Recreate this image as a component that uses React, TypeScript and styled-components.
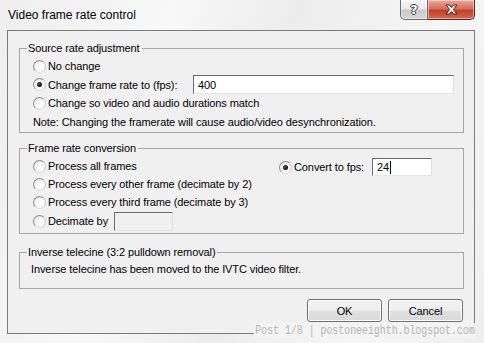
import React from 'react';
import styled, { createGlobalStyle } from 'styled-components';

const GlobalStyle = createGlobalStyle`
  html, body {
    margin: 0;
    padding: 0;
  }
  body {
    font-family: "Liberation Sans", Arial, sans-serif;
    background: #f3f3f3;
  }
`;

const Window = styled.div`
  position: relative;
  width: 484px;
  height: 343px;
  display: flex;
  flex-direction: column;
  overflow: hidden;
  background: linear-gradient(105deg, #eeeeee 0%, #f8f8f8 30%, #ececec 52%, #f6f6f6 78%, #eeeeee 100%);
`;

const TitleBar = styled.div`
  height: 30px;
  flex-shrink: 0;
  display: flex;
  justify-content: space-between;
  align-items: flex-start;
`;

const Title = styled.span`
  margin: 8px 0 0 8px;
  font-size: 12px;
  line-height: 15px;
  color: #000;
`;

const CaptionButtons = styled.div`
  display: flex;
  margin-right: 9px;
`;

const CaptionButton = styled.div<{ $kind: 'help' | 'close' }>`
  width: ${(p) => (p.$kind === 'help' ? 28 : 47)}px;
  height: 20px;
  box-sizing: border-box;
  display: flex;
  align-items: center;
  justify-content: center;
  border: 1px solid ${(p) => (p.$kind === 'help' ? '#6a6a6a' : '#5e231b')};
  border-top: none;
  border-left-width: ${(p) => (p.$kind === 'help' ? 1 : 0)}px;
  border-radius: ${(p) => (p.$kind === 'help' ? '0 0 0 5px' : '0 0 5px 0')};
  background: ${(p) =>
    p.$kind === 'help'
      ? 'linear-gradient(#f7f7f7 0%, #e8e8e8 45%, #c9c9c9 55%, #d8d8d8 100%)'
      : 'linear-gradient(#e9a99c 0%, #d7705f 45%, #c0402c 55%, #d06a52 100%)'};
  box-shadow: inset 0 0 0 1px rgba(255, 255, 255, 0.45);
`;

const HelpGlyph = styled.span`
  font-family: "DejaVu Sans", sans-serif;
  font-weight: bold;
  font-size: 13px;
  line-height: 13px;
  color: #fff;
  text-shadow: 1px 0 0 #3c3c3c, -1px 0 0 #3c3c3c, 0 1px 0 #3c3c3c, 0 -1px 0 #3c3c3c;
`;

const Client = styled.div`
  margin: 0 9px 0 7px;
  height: 304px;
  box-sizing: border-box;
  border: 1px solid #7b7b7b;
  background: #f0f0f0;
  padding: 11px 10px 0 11px;
  display: flex;
  flex-direction: column;
  font-size: 11px;
  letter-spacing: -0.1px;
  color: #000;
`;

const GroupBox = styled.fieldset<{ $pad: string; $gap: number }>`
  margin: 0 0 ${(p) => p.$gap}px;
  padding: ${(p) => p.$pad};
  border: 1px solid #a6a6a6;
  min-inline-size: 0;
`;

const Legend = styled.legend<{ $shift: number }>`
  margin-left: ${(p) => p.$shift}px;
  padding: 0 2px 0 1px;
  line-height: 13px;
`;

const OptionRow = styled.div<{ $h?: number }>`
  display: flex;
  align-items: center;
  height: ${(p) => p.$h ?? 18}px;
  white-space: nowrap;
`;

const Radio = styled.span<{ $checked?: boolean }>`
  position: relative;
  flex-shrink: 0;
  width: 13px;
  height: 13px;
  box-sizing: border-box;
  margin-right: 2px;
  border-radius: 50%;
  border: 1px solid;
  border-color: #8d8d8d #c9c9c9 #dadada #8d8d8d;
  background: radial-gradient(circle at 60% 60%, #ffffff 0%, #f7f7f7 45%, #dcdcdc 100%);
  &::after {
    content: '';
    display: ${(p) => (p.$checked ? 'block' : 'none')};
    position: absolute;
    left: 3px;
    top: 3px;
    width: 5px;
    height: 5px;
    border-radius: 50%;
    background: radial-gradient(circle at 40% 40%, #555 0%, #111 60%, #000 100%);
  }
`;

const TextBox = styled.div<{ $w: number; $h: number; $ml: string; $disabled?: boolean }>`
  display: flex;
  align-items: center;
  flex-shrink: 0;
  width: ${(p) => p.$w}px;
  height: ${(p) => p.$h}px;
  margin-left: ${(p) => p.$ml};
  box-sizing: border-box;
  padding-left: 4px;
  border: 1px solid;
  border-color: #6a6a6a #dedede #e6e6e6 #6a6a6a;
  background: ${(p) => (p.$disabled ? '#f0f0f0' : '#ffffff')};
`;

const Caret = styled.span`
  width: 1px;
  height: 13px;
  margin-left: 1px;
  background: #000;
`;

const Note = styled.div`
  margin-top: 4px;
  line-height: 13px;
  white-space: nowrap;
`;

const ConversionGrid = styled.div`
  display: grid;
  grid-template-columns: 246px 1fr;
`;

const Plain = styled.div`
  line-height: 13px;
`;

const ButtonRow = styled.div`
  display: flex;
  justify-content: flex-end;
  gap: 6px;
  margin: -1px 1px 0 0;
`;

const DialogButton = styled.button`
  width: 75px;
  height: 23px;
  box-sizing: border-box;
  padding: 0;
  border: 1px solid #707070;
  border-radius: 3px;
  background: linear-gradient(#f4f4f4 0%, #ececec 50%, #e0e0e0 51%, #d9d9d9 100%);
  box-shadow: inset 0 0 0 1px #fbfbfb;
  font: inherit;
  letter-spacing: inherit;
  color: #000;
`;

const Watermark = styled.span`
  position: absolute;
  right: 9px;
  bottom: 5px;
  padding-left: 2px;
  background: #f3f3f3;
  font-family: "Liberation Mono", monospace;
  font-size: 13px;
  line-height: 15px;
  color: #b4b4b4;
  transform: scaleX(0.76);
  transform-origin: right center;
  white-space: nowrap;
`;

function CloseGlyph() {
  return (
    <svg width="13" height="11" viewBox="0 0 13 11">
      <path
        d="M1 1h3.4L6.5 3.6 8.6 1H12L8.3 5.5 12 10H8.6L6.5 7.4 4.4 10H1l3.7-4.5z"
        fill="#fff"
        stroke="#4b1a12"
        strokeWidth="1"
        strokeLinejoin="round"
      />
    </svg>
  );
}

export default function App() {
  return (
    <Window>
      <GlobalStyle />
      <TitleBar>
        <Title>Video frame rate control</Title>
        <CaptionButtons>
          <CaptionButton $kind="help">
            <HelpGlyph>?</HelpGlyph>
          </CaptionButton>
          <CaptionButton $kind="close">
            <CloseGlyph />
          </CaptionButton>
        </CaptionButtons>
      </TitleBar>
      <Client>
        <GroupBox $pad="2px 9px 3px 13px" $gap={9}>
          <Legend $shift={-6}>Source rate adjustment</Legend>
          <OptionRow>
            <Radio />
            No change
          </OptionRow>
          <OptionRow $h={19}>
            <Radio $checked />
            Change frame rate to (fps):
            <TextBox $w={261} $h={19} $ml="auto">400</TextBox>
          </OptionRow>
          <OptionRow>
            <Radio />
            Change so video and audio durations match
          </OptionRow>
          <Note>Note: Changing the framerate will cause audio/video desynchronization.</Note>
        </GroupBox>

        <GroupBox $pad="2px 9px 2px 13px" $gap={12}>
          <Legend $shift={-6}>Frame rate conversion</Legend>
          <ConversionGrid>
            <div>
              <OptionRow>
                <Radio />
                Process all frames
              </OptionRow>
              <OptionRow>
                <Radio />
                Process every other frame (decimate by 2)
              </OptionRow>
              <OptionRow>
                <Radio />
                Process every third frame (decimate by 3)
              </OptionRow>
              <OptionRow $h={20}>
                <Radio />
                Decimate by
                <TextBox $w={59} $h={19} $ml="6px" $disabled />
              </OptionRow>
            </div>
            <div>
              <OptionRow $h={20}>
                <Radio $checked />
                Convert to fps:
                <TextBox $w={60} $h={18} $ml="8px">
                  24
                  <Caret />
                </TextBox>
              </OptionRow>
            </div>
          </ConversionGrid>
        </GroupBox>

        <GroupBox $pad="4px 11px 12px 11px" $gap={11}>
          <Legend $shift={-4}>Inverse telecine (3:2 pulldown removal)</Legend>
          <Plain>Inverse telecine has been moved to the IVTC video filter.</Plain>
        </GroupBox>

        <ButtonRow>
          <DialogButton>OK</DialogButton>
          <DialogButton>Cancel</DialogButton>
        </ButtonRow>
      </Client>
      <Watermark>Post 1/8 | postoneeighth.blogspot.com</Watermark>
    </Window>
  );
}
